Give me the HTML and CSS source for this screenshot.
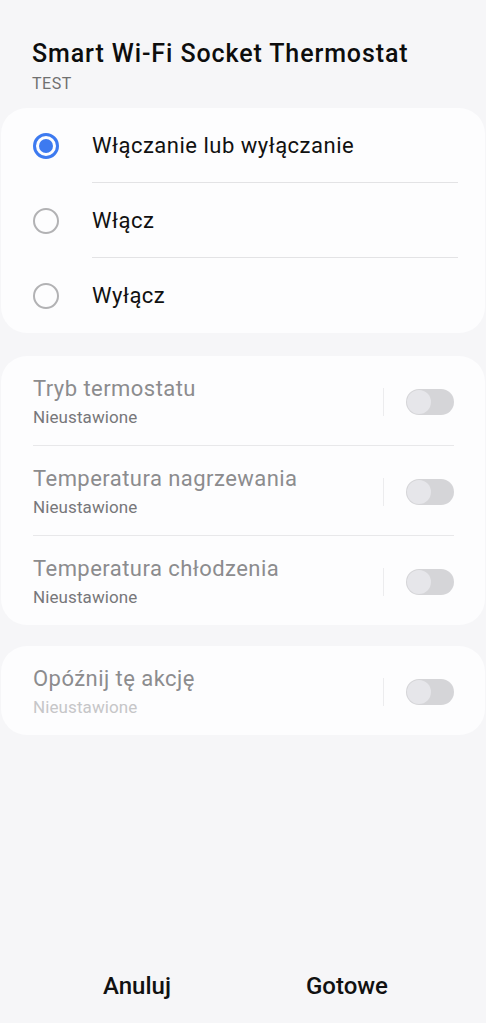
FILE: index.html
```html
<!DOCTYPE html>
<html lang="pl">
<head>
  <meta charset="UTF-8">
  <title>Smart Wi-Fi Socket Thermostat</title>
  <link rel="stylesheet" href="styles.css">
</head>
<body>
  <div class="page">
    <!-- nagłówek -->
    <div class="header">
      <div class="title">Smart Wi-Fi Socket Thermostat</div>
      <div class="subtitle">TEST</div>
    </div>

    <!-- wybór akcji -->
    <div class="card">
      <div class="radio-row">
        <span class="radio checked"></span>
        <div class="radio-label">Włączanie lub wyłączanie</div>
      </div>
      <div class="radio-row">
        <span class="radio"></span>
        <div class="radio-label">Włącz</div>
      </div>
      <div class="radio-row">
        <span class="radio"></span>
        <div class="radio-label last">Wyłącz</div>
      </div>
    </div>

    <!-- ustawienia termostatu -->
    <div class="card card-list">
      <div class="switch-row">
        <div class="switch-text">
          <div class="switch-title">Tryb termostatu</div>
          <div class="switch-sub">Nieustawione</div>
        </div>
        <span class="vline"></span>
        <span class="toggle"></span>
      </div>
      <div class="switch-row">
        <div class="switch-text">
          <div class="switch-title">Temperatura nagrzewania</div>
          <div class="switch-sub">Nieustawione</div>
        </div>
        <span class="vline"></span>
        <span class="toggle"></span>
      </div>
      <div class="switch-row">
        <div class="switch-text">
          <div class="switch-title">Temperatura chłodzenia</div>
          <div class="switch-sub">Nieustawione</div>
        </div>
        <span class="vline"></span>
        <span class="toggle"></span>
      </div>
    </div>

    <div class="card card-list">
      <div class="switch-row">
        <div class="switch-text">
          <div class="switch-title">Opóźnij tę akcję</div>
          <div class="switch-sub faint">Nieustawione</div>
        </div>
        <span class="vline"></span>
        <span class="toggle"></span>
      </div>
    </div>

    <!-- przyciski -->
    <div class="footer">
      <button type="button" class="btn">Anuluj</button>
      <button type="button" class="btn">Gotowe</button>
    </div>
  </div>
</body>
</html>
```
FILE: styles.css
```css
body { margin:0; background:#f6f6f8; font-family:Roboto, "Noto Sans", sans-serif; color:#111; }
.page { min-height:100vh; display:flex; flex-direction:column; }

.header { padding:39px 32px 0; }
.title { font-size:25px; line-height:30px; font-weight:500; letter-spacing:0.9px; color:#0d0d0d; }
.subtitle { margin-top:5px; font-size:16px; line-height:20px; letter-spacing:0.5px; color:#707070; }

.card { background:#fdfdfe; border-radius:26px; margin:14px 1px 0; }
.card-list { margin-top:23px; padding:0 31px 0 32px; }
.card-list + .card-list { margin-top:21px; }

.radio-row { display:flex; align-items:center; height:75px; padding-left:32px; }
.radio { box-sizing:border-box; width:26px; height:26px; border-radius:50%; border:2px solid #b2b2b4; flex:none; }
.radio.checked { border:3px solid #3d7af0; display:flex; align-items:center; justify-content:center; }
.radio.checked::after { content:""; width:14px; height:14px; border-radius:50%; background:#3d7af0; }
.radio-label { flex:1; align-self:stretch; display:flex; align-items:center; margin:0 27px 0 33px; font-size:22px; letter-spacing:0.5px; color:#111; border-bottom:1px solid #e3e3e5; }
.radio-label.last { border-bottom:none; }

.switch-row { display:flex; align-items:center; padding:19px 0 16px; border-bottom:1px solid #e8e8ea; }
.switch-row:last-child { border-bottom:none; }
.switch-text { flex:1; }
.switch-title { font-size:22px; line-height:28px; margin-bottom:2px; letter-spacing:0.45px; color:#8c8c8e; }
.switch-sub { font-size:17px; line-height:24px; letter-spacing:0.1px; color:#77777a; }
.switch-sub.faint { color:#c6c6c8; }
.vline { width:1px; height:28px; background:#ececee; margin-right:22px; }
.toggle { box-sizing:border-box; width:48px; height:26px; border-radius:13px; background:#d5d5d8; padding:1px; display:flex; }
.toggle::before { content:""; width:24px; height:24px; border-radius:50%; background:#e6e6ea; }

.footer { margin-top:auto; display:flex; padding:16px 34px 23px 32px; }
.btn { flex:1; background:none; border:none; padding:0; font-family:inherit; font-size:24px; line-height:28px; font-weight:500; color:#111; cursor:pointer; }
```
